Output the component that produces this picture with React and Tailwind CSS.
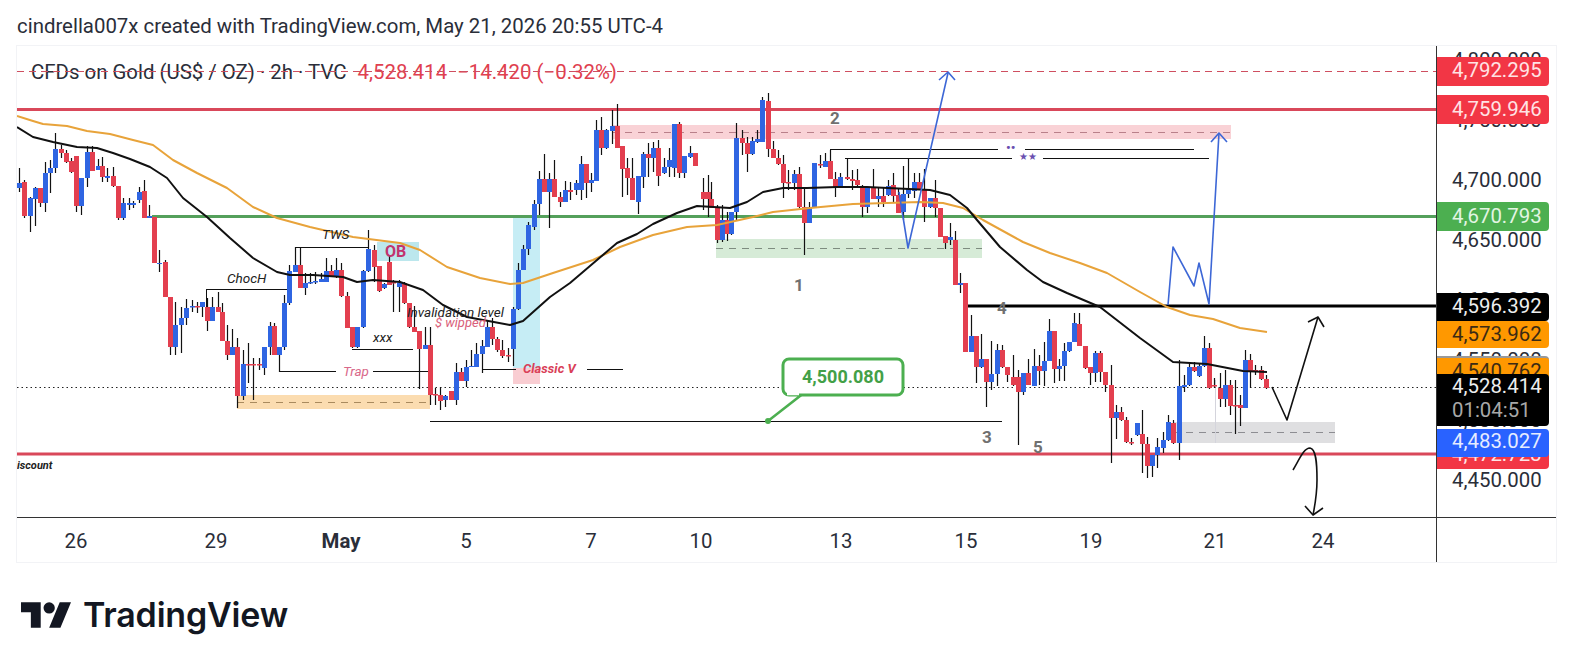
const candles = [
  ['b',19.5,183,188,168,192],['r',24.5,182,216,180,218],['b',30.5,198,216,197,232],['b',35.5,188,199,187,226],['r',40.5,188,203,188,207],
  ['b',45.5,173,203,162,212],['b',50.5,168,173,160,193],['b',55.5,149,168,133,173],['r',61.5,149,153,145,158],['r',66,153,162,150,163],
  ['r',71.5,161,172,158,173],['r',76.5,156,206,156,212],['b',81.5,178,206,178,215],['b',87.5,152,178,146,187],['r',92.5,152,171,146,171],
  ['b',98,166,170,159,170],['r',102.5,166,177,157,182],['b',107.5,176,178,168,182],['r',113.5,176,186,167,187],['r',118.5,186,218,186,220],
  ['b',123.5,203,218,198,220],['b',129,203,205,198,210],['b',133.5,203,205,201,208],['b',139.5,192,200,187,203],['r',144,191,218,180,218],
  ['b',149,216,218,205,218],['r',154.5,217,263,217,263],['b',159.5,263,264,250,272],['r',165.5,262,297,260,297],['r',170.5,297,347,297,355],
  ['b',175.5,325,347,302,355],['b',181,318,325,307,353],['b',186,308,318,299,325],['b',192,306,307.5,300,312],['r',197,306,307.5,302,313],
  ['b',202,302,307,302,317],['r',207.5,307,321,298,331],['b',212.5,307,321,297,320],['r',218,307,312,292,312],['r',222.5,312,341,303,341],
  ['r',227.5,341,355,325,360],['b',232.5,347,355,329,355],['r',237.5,347,396,338,408],['b',243.5,364,396,350,400],['r',248.5,364,365.5,343,383],
  ['r',253.5,364,365.5,358,400],['r',259,364,365.5,358,370],['b',264,347,368,347,375],['b',270,326,347,322,355],['r',274.5,326,355,323,355],
  ['b',279.5,347,355,347,372],['b',284.5,303,347,295,350],['b',289.5,271,303,265,305],['b',295,265,272,247,272],['r',300,265,288,247,288],
  ['b',305,283,288,273,295],['b',310,282,283.5,273,284],['b',315,281,282.5,272,284],['b',321,279,282,273,282],['b',326,271,282,258,282],
  ['r',331,271,277,265,277],['b',336,270,277,258,278],['r',341,270,296,263,297],['r',347,296,328,292,328],['r',352,327,347,327,348],
  ['b',357,327,347,327,348],['b',363,271,327,270,328],['b',368,249,271,230,272],['r',374,250,267,245,282],['r',379,266,291,266,292],
  ['b',384,284,288,283,289],['r',389,262,285,255,285],['r',393,282,283.5,280,312],['b',399,283,287,280,312],['r',404,283,303,282,304],
  ['r',409,303,327,303,328],['r',414,327,332,306,332],['r',419,331,349,331,389],['b',425,345,349,327,349],['r',430,345,395,327,405],
  ['r',435,394,395.5,388,405],['r',440,395,401,387,410],['b',445,396,400,395,407],['r',451,391,400,391,400],['b',456,372,400,363,405],
  ['r',461,372,381,368,381],['b',466,367,381,360,387],['b',471,366,367,350,367],['b',476,354,367,343,367],['b',482,346,354,340,373],
  ['b',487,327,347,320,347],['r',492,327,339,318,345],['r',497,339,350,337,352],['r',502,350,356,340,358],['r',508,355,356.5,348,362],
  ['b',513,309,349,307,366],['b',518,270,309,263,310],['b',523,249,270,245,270],['b',528,225,249,222,255],['b',534,204,227,200,230],
  ['b',539,179,204,171,215],['r',544,179,192,154,192],['b',549,179,192,173,228],['r',554,179,197,160,197],['r',560,197,202,192,207],
  ['b',565,190,202,181,202],['r',570,190,192,182,200],['b',576,183,190,180,195],['b',581,164,190,156,200],['r',586,164,183,164,198],
  ['b',591,180,183,173,192],['b',596,130,181,120,181],['r',601,130,148,117,155],['b',606,130,148,129,149],['b',612,126,131,110,144],
  ['r',617,126,148,104,148],['r',622,146,169,146,197],['r',627,168,178,158,195],['r',632,178,200,158,200],['b',638,176,202,176,214],
  ['b',643,154,177,152,188],['r',648,154,158,143,177],['b',653,148,158,142,172],['r',658,148,176,140,186],['b',664,167,173,158,174],
  ['b',669,160,167,148,177],['b',674,124,168,124,177],['r',679,124,173,122,178],['b',684,156,173,156,178],['b',690,153,157,146,158],
  ['r',695,153,166,153,166],['r',703,192,199,178,210],['r',708,192,199,175,217],['r',711.5,199,208,182,208],['r',717,208,240,205,243],
  ['b',722,220,240,205,242],['r',727,220,234,212,241],['b',731,212,234,212,235],['b',736,138,212,123,220],['r',742,138,143,130,155],
  ['r',747,143,154,137,172],['b',752,141,154,137,155],['b',757,139,142,130,143],['b',762,100,142,97,142],['r',768,101,149,93,157],
  ['r',773,149,158,141,158],['r',778,158,164,150,165],['r',783,164,183,155,198],['r',788,182,183.5,170,190],['b',794,174,183,170,190],
  ['r',799,174,207,167,208],['r',804,207,223,187,255],['b',809,207,223,202,223],['b',814,163,208,163,208],['r',820,164,165.5,155,168],
  ['b',825,161,167,153,167],['r',830,161,179,150,179],['r',835,179,187,172,197],['b',840,177,187,173,188],['r',847,177,179,158,180],
  ['r',852,179,181,170,190],['r',857,180,185,169,186],['r',862,186,207,185,217],['b',867,187,207,187,213],['r',873,187,199,169,199],
  ['b',878,196,199,187,207],['r',883,196,202,187,207],['b',888,186,195,180,196],['r',893,185,196,173,202],['r',898,195,213,189,213],
  ['b',903,194,212,166,220],['b',908,189,194,158,198],['b',914,182,191,173,198],['r',919,182,189,173,190],['r',924,189,207,169,222],
  ['b',930,198,207,198,208],['r',935,198,208,180,217],['r',940,208,237,208,237],['r',945,236,243,236,249],['b',950,237,240,223,245],
  ['r',955,240,285,231,285],['b',960,283,285,273,293],['r',965,283,352,283,352],['b',971,336,352,315,352],['r',976,336,367,336,383],
  ['b',981,359,367,334,368],['r',986,359,382,359,407],['b',991,374,382,341,390],['b',997,350,374,344,386],['r',1002,350,367,345,368],
  ['r',1007,367,375,367,382],['r',1013,377,385,355,386],['r',1018,377,392,370,445],['b',1023,373,392,373,395],['r',1028,373,385,359,385],
  ['b',1034,366,386,349,386],['r',1039,366,371,355,385],['b',1044,361,371,342,386],['b',1049,331,361,319,361],['r',1054,331,369,331,383],
  ['b',1059,366,369,359,381],['b',1064,351,366,343,381],['b',1069,342,351,342,352],['b',1074,323,342,313,342],['r',1079,324,346,313,346],
  ['r',1085,346,368,346,369],['r',1090,367,373,367,385],['b',1095,353,373,351,382],['r',1100,353,372,351,382],['r',1105,372,385,372,392],
  ['r',1111,385,418,365,463],['b',1116,412,418,405,439],['r',1121,412,420,407,421],['r',1126,420,442,417,443],['r',1131,442,443.5,438,445],
  ['b',1137,423,435,423,436],['r',1142,434,444,410,473],['r',1147,444,466,437,478],['b',1152,455,466,455,477],['b',1157,447,455,438,468],
  ['b',1163,440,448,432,453],['b',1168,422,440,415,441],['r',1173,423,443,420,444],['b',1179,386,443,360,460],['b',1184,385,387,375,392],
  ['b',1189,367,385,362,386],['r',1194,367,371,362,372],['b',1199,366,376,363,377],['b',1204,348,366,336,367],['r',1209,348,388,343,389],
  ['r',1214,385,386.5,378,388],['r',1220,388,399,373,407],['b',1225,385,399,370,407],['r',1230,385,406,380,415],['r',1235,405,406.5,380,434],
  ['r',1240,405,408,395,426],['b',1245,360,408,350,408],['r',1250,360,371,354,388],['r',1255,370,371.5,365,375],['r',1261,370,379,366,380],
  ['r',1266,379,388,375,389],
]

const blackEma = '17,127 33,137 53,142 77,147 97,148 113,153 130,159 150,167 167,178 183,198 207,217 230,238 253,258 277,272 290,275 313,275 343,277 357,282 373,280 400,282 423,290 443,305 467,317 510,325 523,321 550,297 570,283 597,260 617,243 637,234 653,224 677,213 697,206 730,208 747,202 763,192 783,188 807,188 837,187 867,187 930,190 950,195 967,208 977,220 1000,247 1027,270 1043,282 1067,293 1100,307 1140,338 1173,362 1207,364 1243,371 1267,372'
const orangeEma = '17,116 33,121 43,124 67,126 87,131 110,134 133,140 153,145 173,160 197,173 227,188 253,207 277,218 310,227 353,237 400,243 420,250 447,267 480,278 510,284 523,283 553,273 593,260 620,247 653,235 687,227 717,225 753,217 773,212 810,208 853,204 887,203 920,202 943,203 963,208 983,220 1023,242 1050,253 1080,263 1107,273 1140,292 1167,307 1190,315 1213,319 1240,328 1267,332'

const ticks = ['4,800.000', '4,750.000', '4,700.000', '4,650.000', '4,600.000', '4,550.000', '4,500.000', '4,450.000']
const dates = ['26', '29', 'May', '5', '7', '10', '13', '15', '19', '21', '24']

function PriceLabel({ className, children }) {
  return (
    <div className={`absolute left-0 w-[112px] pl-[15px] rounded-r-[4px] ${className}`}>{children}</div>
  )
}

function Chart() {
  return (
    <svg viewBox="17 46 1419 471" className="absolute inset-0 w-[1419px] h-[471px]">
      {/* zones */}
      <rect x="237" y="395" width="193" height="14" fill="#fbdcb0" />
      <rect x="612" y="125" width="619" height="14" fill="#f9d2d6" />
      <rect x="716" y="239" width="266" height="19" fill="#d6ebd7" />
      <rect x="1173" y="422" width="162" height="21" fill="#dfdfe1" />
      <rect x="513" y="217" width="27" height="151" fill="#c6edf5" />
      <rect x="513" y="368" width="27" height="16" fill="#f9cdd2" />
      <rect x="377" y="242" width="42" height="19" fill="#bce7ed" />
      <line x1="237" y1="402.5" x2="430" y2="402.5" stroke="#a98a5e" strokeDasharray="7 6" />
      <line x1="612" y1="132.5" x2="1231" y2="132.5" stroke="#b9808a" strokeDasharray="7 6" />
      <line x1="716" y1="248.5" x2="982" y2="248.5" stroke="#7e8c80" strokeDasharray="7 6" />
      <line x1="1173" y1="432.5" x2="1335" y2="432.5" stroke="#8d8d92" strokeDasharray="7 6" />
      <line x1="1215.5" y1="380" x2="1215.5" y2="443" stroke="#d4d4dc" />

      {/* price lines */}
      <line x1="17" y1="71.5" x2="1436" y2="71.5" stroke="#cf4f60" strokeDasharray="7 5" />
      <line x1="17" y1="387.5" x2="1436" y2="387.5" stroke="#222" strokeDasharray="1.5 3" />
      <line x1="17" y1="109.5" x2="1436" y2="109.5" stroke="#d9485a" strokeWidth="3" />
      <line x1="152" y1="216.5" x2="1436" y2="216.5" stroke="#54a05b" strokeWidth="3" />
      <line x1="968" y1="306" x2="1436" y2="306" stroke="#000" strokeWidth="3" />
      <line x1="17" y1="454" x2="1436" y2="454" stroke="#d9485a" strokeWidth="3" />

      {/* annotation lines */}
      <g stroke="#111" strokeWidth="1">
        <line x1="295" y1="247.5" x2="368" y2="247.5" />
        <line x1="206.5" y1="289.5" x2="287" y2="289.5" />
        <line x1="206.5" y1="289" x2="206.5" y2="307" />
        <line x1="352" y1="349.5" x2="413" y2="349.5" />
        <line x1="279" y1="371.5" x2="336" y2="371.5" />
        <line x1="373" y1="371.5" x2="428" y2="371.5" />
        <line x1="483" y1="369.5" x2="516" y2="369.5" />
        <line x1="587" y1="369.5" x2="623" y2="369.5" />
        <line x1="430" y1="421.5" x2="1002" y2="421.5" />
        <line x1="830" y1="149.5" x2="998" y2="149.5" />
        <line x1="1025" y1="149.5" x2="1194" y2="149.5" />
        <line x1="845" y1="158.5" x2="1012" y2="158.5" />
        <line x1="1043" y1="158.5" x2="1209" y2="158.5" />
      </g>

      {/* candles */}
      {candles.map(([c, x, t, b, wt, wb]) => {
        const left = Math.round(x - 2.5)
        return (
          <g key={x}>
            <line x1={left + 2.5} y1={wt} x2={left + 2.5} y2={wb} stroke="#111" strokeWidth="1.2" />
            <rect x={left} y={t} width="5" height={b - t} fill={c === 'r' ? '#e33f4f' : '#2f65e2'} />
          </g>
        )
      })}

      <polyline points={orangeEma} fill="none" stroke="#e8a33a" strokeWidth="2" strokeLinejoin="round" />
      <polyline points={blackEma} fill="none" stroke="#111" strokeWidth="2" strokeLinejoin="round" />

      {/* hand drawn arrows */}
      <g fill="none" stroke="#3d67d6" strokeWidth="1.6" strokeLinejoin="round">
        <polyline points="899,192 908,248 948,73" />
        <polyline points="939,80 948,72 955,80" />
        <polyline points="1168,305 1173,247 1194,286 1199,263 1209,304 1219,133" />
        <polyline points="1211,142 1219,133 1227,142" />
      </g>
      <g fill="none" stroke="#111" strokeWidth="1.6" strokeLinejoin="round">
        <polyline points="1272,387 1287,420 1318,317" />
        <polyline points="1308,322 1318,317 1324,327" />
        <path d="M1293 470 C1300 458 1304 448 1310 448 C1316 449 1317 462 1317 480 C1317 495 1315 505 1313 515" />
        <polyline points="1305,506 1313,515 1323,508" />
      </g>

      {/* callout */}
      <path d="M768 421 L800 396 L786 390" fill="#fff" stroke="#4caf50" strokeWidth="2.5" />
      <rect x="783" y="359" width="120" height="36" rx="6" fill="#fff" stroke="#4caf50" strokeWidth="3" />
      <path d="M787 393.5 L799 393.5" stroke="#fff" strokeWidth="3.5" />
      <circle cx="768" cy="421" r="3" fill="#4caf50" />
      <text x="843" y="383" textAnchor="middle" className="text-[18px] font-bold fill-[#43a047]">4,500.080</text>

      {/* labels */}
      <g className="italic text-[13.5px] fill-[#222]">
        <text x="322" y="239">TWS</text>
        <text x="227" y="283">ChocH</text>
        <text x="373" y="342">xxx</text>
        <text x="407" y="317">Invalidation level</text>
      </g>
      <text x="343" y="376" className="italic text-[13.5px] fill-[#d9688a]">Trap</text>
      <text x="435" y="327" className="italic text-[13px] fill-[#d9607a]">$ wipped</text>
      <text x="523" y="373" className="italic font-bold text-[13px] fill-[#d94058]">Classic V</text>
      <text x="385" y="257" className="font-bold text-[16px] fill-[#c2336e]">OB</text>
      <text x="17" y="469" className="italic font-bold text-[11px] fill-[#222]">iscount</text>
      <g className="font-bold text-[17px] fill-[#707070]" textAnchor="middle">
        <text x="799" y="291">1</text>
        <text x="835" y="124">2</text>
        <text x="987" y="443">3</text>
        <text x="1002" y="314">4</text>
        <text x="1038" y="453">5</text>
      </g>
      <text x="1006" y="152" className="text-[13px] font-bold fill-[#6a4fb0]">••</text>
      <text x="1019" y="160" className="text-[10px] fill-[#6a4fb0]">★★</text>
    </svg>
  )
}

export default function App() {
  return (
    <div className="min-h-screen flex flex-col bg-white font-[Roboto,sans-serif] text-[20.4px] text-[#2a2e39]">
      <div className="h-[45px] pl-[17px] pt-[11px] leading-[30px]">
        cindrella007x created with TradingView.com, May 21, 2026 20:55 UTC-4
      </div>

      <div className="ml-[16px] w-[1541px] h-[518px] flex border border-[#f2f3f6] overflow-hidden">
        <div className="w-[1419px] flex flex-col">
          <div className="relative h-[472px] shrink-0 border-b border-[#333]">
            <div className="absolute inset-x-0 top-[11px] pl-[14px] flex gap-[11px] leading-[30px] whitespace-nowrap">
              <span>CFDs on Gold (US$ / OZ) · 2h · TVC</span>
              <span className="flex gap-[10px] text-[#e0404f]">
                <span>4,528.414</span>
                <span>−14.420 (−0.32%)</span>
              </span>
            </div>
            <Chart />
          </div>
          <div className="grid grid-cols-[118px_162px_88px_162px_88px_132px_148px_102px_148px_100px_116px] leading-[46px] text-center">
            {dates.map((label) => (
              <span key={label} className={label === 'May' ? 'font-bold' : ''}>{label}</span>
            ))}
          </div>
        </div>

        <div className="flex-1 border-l border-[#333]">
          <div className="relative h-[472px] border-b border-[#333]">
            <div className="flex flex-col pl-[15px]">
              {ticks.map((label) => (
                <span key={label} className="h-[60px] leading-[29px]">{label}</span>
              ))}
            </div>
            <PriceLabel className="top-[11px] h-[29px] leading-[27px] bg-[#f23645] text-[#ffe3e5]">4,792.295</PriceLabel>
            <PriceLabel className="top-[49px] h-[29px] leading-[29px] bg-[#f23645] text-[#ffe3e5]">4,759.946</PriceLabel>
            <PriceLabel className="top-[156px] h-[29px] leading-[29px] bg-[#4caf50] text-[#e3f5e3]">4,670.793</PriceLabel>
            <PriceLabel className="top-[310px] h-[26px] leading-[26px] bg-[#ff9800] border-t-2 border-[#999] text-[#3b2a14]">4,540.762</PriceLabel>
            <PriceLabel className="top-[247px] h-[28px] leading-[26px] bg-black text-[#eeeeee]">4,596.392</PriceLabel>
            <PriceLabel className="top-[275px] h-[27px] leading-[27px] bg-[#ff9800] text-[#3b2a14]">4,573.962</PriceLabel>
            <PriceLabel className="top-[328px] h-[52px] bg-black text-[#eeeeee]">
              <div className="leading-[24px]">4,528.414</div>
              <div className="leading-[24px] text-[#a8a8a8]">01:04:51</div>
            </PriceLabel>
            <PriceLabel className="top-[394px] h-[29px] leading-[29px] bg-[#f23645] text-[#ffe3e5]">4,472.723</PriceLabel>
            <PriceLabel className="top-[383px] h-[28px] leading-[25px] bg-[#2962ff] text-[#e6ecff]">4,483.027</PriceLabel>
          </div>
        </div>
      </div>

      <div className="mt-[34px] ml-[21px] flex items-center gap-[12px] h-[36px]">
        <svg viewBox="0 4 35.5 18" className="w-[50px] h-[26px] fill-[#131722]">
          <path d="M14 22H7V11H0V4h14v18zM28 22h-8l7.5-18h8L28 22z" />
          <circle cx="20" cy="8" r="4" />
        </svg>
        <span className="font-[Inter,sans-serif] font-semibold text-[34px] tracking-[-0.2px] text-[#131722] leading-[36px]">TradingView</span>
      </div>
    </div>
  )
}
